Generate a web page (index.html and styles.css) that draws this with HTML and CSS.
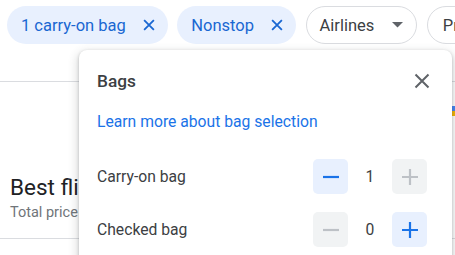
FILE: index.html
```html
<!DOCTYPE html>
<html>
<head>
<meta charset="utf-8">
<link rel="stylesheet" href="styles.css">
</head>
<body>
<div class="page">
  <div class="chips">
    <div class="chip chip-active">
      <span>1 carry-on bag</span>
      <svg class="chip-x" viewBox="0 0 24 24" width="18" height="18"><path d="M5.5 5.5L18.5 18.5M18.5 5.5L5.5 18.5" stroke="currentColor" stroke-width="2.4" fill="none"/></svg>
    </div>
    <div class="chip chip-active">
      <span>Nonstop</span>
      <svg class="chip-x" viewBox="0 0 24 24" width="18" height="18"><path d="M5.5 5.5L18.5 18.5M18.5 5.5L5.5 18.5" stroke="currentColor" stroke-width="2.4" fill="none"/></svg>
    </div>
    <div class="chip chip-outline">
      <span>Airlines</span>
      <svg class="chip-caret" viewBox="0 0 11 6" width="11" height="6"><path d="M0 0H11L5.5 5.5Z" fill="currentColor"/></svg>
    </div>
    <div class="chip chip-outline chip-last">
      <span>Price</span>
    </div>
  </div>
  <div class="divider"></div>
  <div class="results">
    <div class="results-title">Best flights</div>
    <div class="results-sub">Total price includes taxes + fees for 1 adult</div>
  </div>
  <div class="divider"></div>
  <div class="marks">
    <span class="mark mark-blue"></span>
    <span class="mark mark-yellow"></span>
  </div>

  <div class="popup">
    <div class="popup-head">
      <div class="popup-title">Bags</div>
      <svg class="popup-close" viewBox="0 0 24 24" width="24" height="24"><path d="M5.5 5.5L18.5 18.5M18.5 5.5L5.5 18.5" stroke="currentColor" stroke-width="2" fill="none"/></svg>
    </div>
    <a class="popup-link">Learn more about bag selection</a>
    <div class="bag-row">
      <span class="bag-label">Carry-on bag</span>
      <div class="stepper">
        <button class="step step-on"><svg viewBox="0 0 18 18" width="18" height="18"><path d="M1 9H17" stroke="currentColor" stroke-width="2.2"/></svg></button>
        <span class="count">1</span>
        <button class="step step-off"><svg viewBox="0 0 18 18" width="18" height="18"><path d="M1 9H17M9 1V17" stroke="currentColor" stroke-width="2.2"/></svg></button>
      </div>
    </div>
    <div class="bag-row">
      <span class="bag-label">Checked bag</span>
      <div class="stepper">
        <button class="step step-off"><svg viewBox="0 0 18 18" width="18" height="18"><path d="M1 9H17" stroke="currentColor" stroke-width="2.2"/></svg></button>
        <span class="count">0</span>
        <button class="step step-on"><svg viewBox="0 0 18 18" width="18" height="18"><path d="M1 9H17M9 1V17" stroke="currentColor" stroke-width="2.2"/></svg></button>
      </div>
    </div>
  </div>
</div>
</body>
</html>
```
FILE: styles.css
```css
* { box-sizing: border-box; }
html, body {
  margin: 0;
  padding: 0;
  background: #fff;
  overflow: hidden;
}
body {
  font-family: Roboto, "Open Sans", Arial, sans-serif;
  width: 455px;
  height: 255px;
}
.page {
  position: relative;
  width: 455px;
  height: 255px;
  overflow: hidden;
}
.chips {
  display: flex;
  gap: 9.5px;
  padding: 6px 0 0 7px;
  white-space: nowrap;
  height: 81px;
}
.chip {
  display: flex;
  align-items: center;
  flex-shrink: 0;
  height: 38px;
  border-radius: 19px;
  font-size: 16.5px;
}
.chip-active {
  background: #e8f0fe;
  color: #1967d2;
  padding: 0 10px 0 14px;
}
.chip-active span { margin-right: 14px; }
.chip-x { display: block; }
.chip-outline {
  border: 1px solid #dadce0;
  color: #3c4043;
  padding: 0 13px 0 13px;
}
.chip-last { padding-left: 15px; }
.chip-outline span { margin-right: 18px; }
.chip-caret { color: #5f6368; display: block; }
.divider {
  height: 1px;
  background: #dadce0;
}
.results {
  padding: 92px 0 18px 10px;
  height: 156px;
}
.results-title {
  font-size: 22.5px;
  color: #202124;
  line-height: 26px;
}
.results-sub {
  font-size: 14.5px;
  color: #70757a;
  line-height: 18px;
  margin-top: 4px;
}
.marks {
  position: absolute;
  left: 452px;
  top: 106px;
  display: flex;
  flex-direction: column;
}
.mark { display: block; width: 4px; height: 5px; }
.mark-blue { background: #4285f4; }
.mark-yellow { background: #f4b400; }

.popup {
  position: absolute;
  left: 79px;
  top: 50px;
  width: 373px;
  height: 240px;
  background: #fff;
  border-radius: 8px;
  box-shadow: 0 4px 8px 3px rgba(60,64,67,.15), 0 1px 3px rgba(60,64,67,.3);
  padding: 0 25px 0 18px;
  color: #3c4043;
}
.popup-head {
  display: flex;
  align-items: center;
  justify-content: space-between;
  height: 62px;
}
.popup-title {
  font-size: 17.3px;
  font-weight: 500;
  color: #3c4043;
}
.popup-close {
  color: #5f6368;
  display: block;
  margin-right: -7px;
}
.popup-link {
  display: block;
  font-size: 15.7px;
  color: #1a73e8;
  line-height: 20px;
  height: 38px;
}
.bag-row {
  display: flex;
  align-items: center;
  justify-content: space-between;
  height: 53px;
}
.bag-label {
  font-size: 15.7px;
  color: #3c4043;
}
.stepper {
  display: flex;
  align-items: center;
}
.step {
  width: 35px;
  height: 35px;
  border: none;
  border-radius: 5px;
  padding: 0;
  display: flex;
  align-items: center;
  justify-content: center;
}
.step svg { display: block; }
.step-on { background: #e8f0fe; color: #1a73e8; }
.step-off { background: #f1f3f4; color: #bdc1c6; }
.count {
  width: 44px;
  text-align: center;
  font-size: 15.7px;
  color: #3c4043;
}
```
